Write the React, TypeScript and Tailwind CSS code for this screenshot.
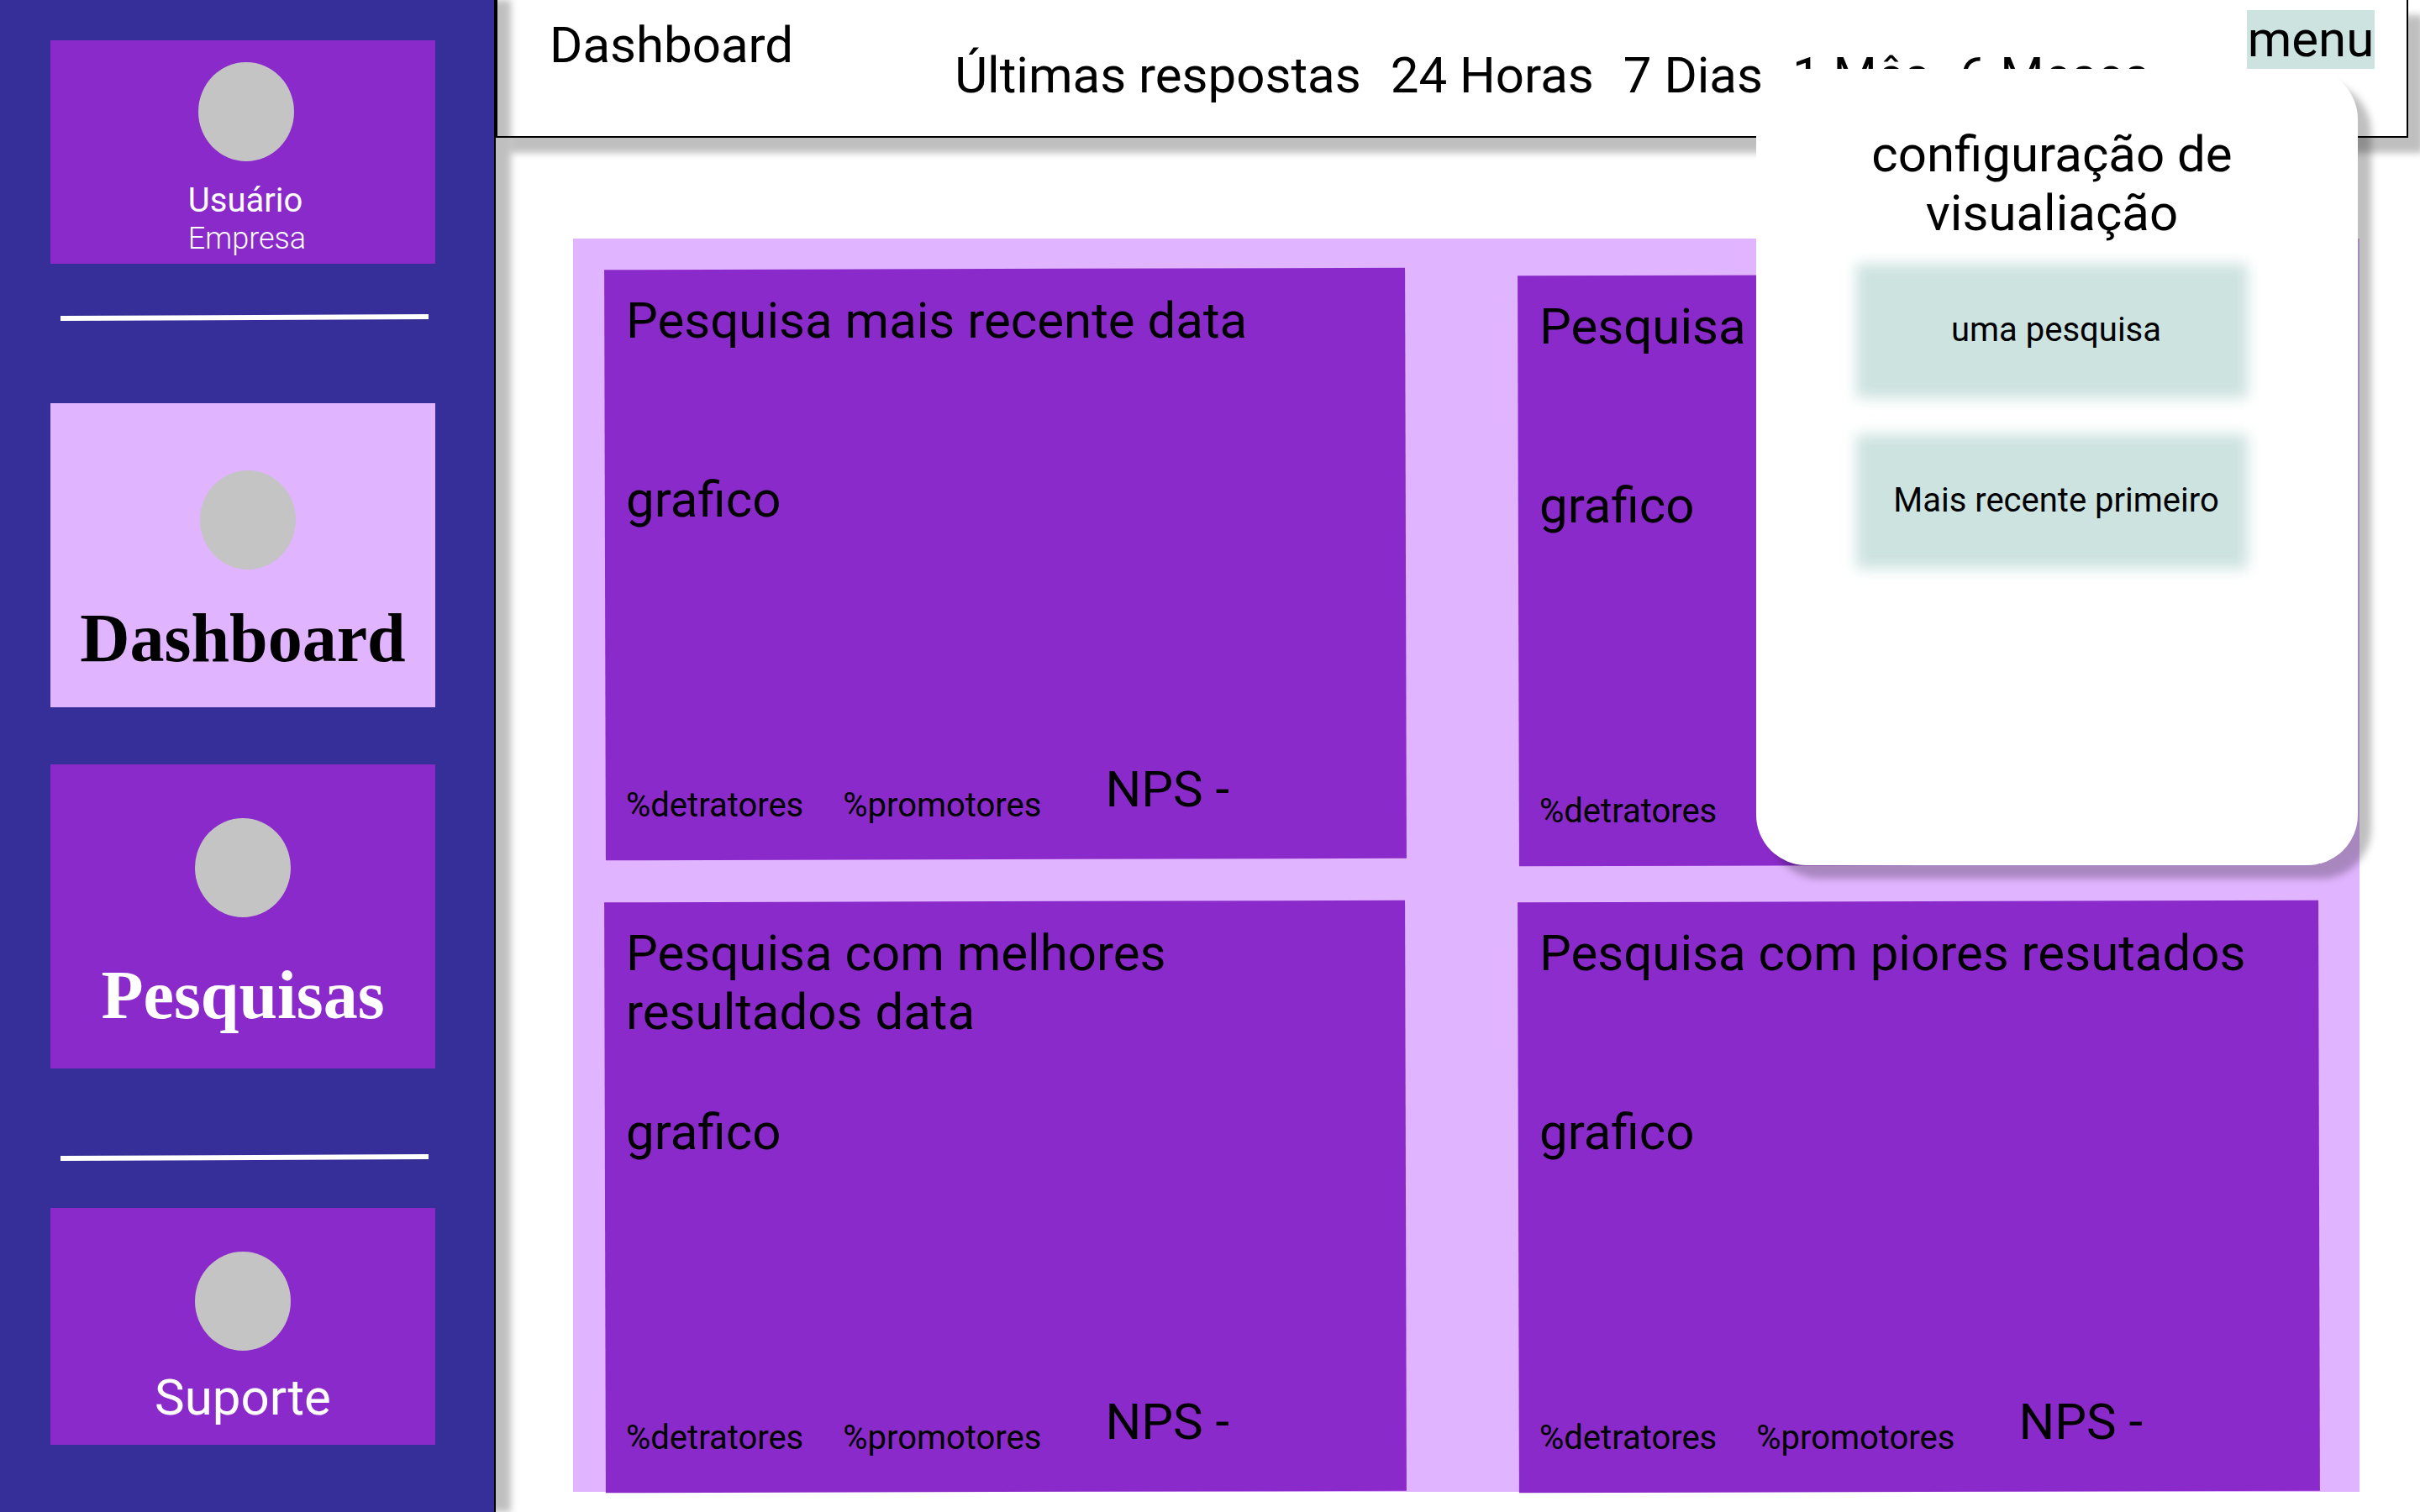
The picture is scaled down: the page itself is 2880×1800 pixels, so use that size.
import type { ReactNode } from "react";

function Avatar() {
  return <span className="block h-[118px] w-[114px] shrink-0 rounded-[50%] bg-[#c4c4c4]" />;
}

function Divider() {
  return <hr className="ml-3 mr-2 h-[6px] -rotate-[0.26deg] border-0 bg-white" />;
}

function NavCard({ className, children }: { className: string; children: ReactNode }) {
  return (
    <a href="#" className={`flex flex-col items-center ${className}`}>
      {children}
    </a>
  );
}

function Sidebar() {
  return (
    <aside className="relative z-10 w-[590px] shrink-0 border-r-2 border-black bg-[#362f99] pl-[60px] pr-[70px] pt-12 shadow-[18px_0_8px_rgba(0,0,0,0.25)]">
      <div className="flex h-[266px] flex-col items-center bg-[#8b2aca] pl-2 pt-[26px] text-white">
        <Avatar />
        <div className="mt-[23px] flex flex-col pl-0.5">
          <span className="text-[40px] leading-[47px]">Usuário</span>
          <span className="text-[36px] font-light leading-[44px]">Empresa</span>
        </div>
      </div>
      <div className="mt-[61px]">
        <Divider />
      </div>
      <nav className="flex flex-col">
        <NavCard className="mt-[99px] h-[362px] bg-[#e1b4ff] pt-20">
          <span className="pl-3">
            <Avatar />
          </span>
          <span className="mt-[35px] font-['Liberation_Serif',serif] text-[82px] font-bold leading-[94px]">Dashboard</span>
        </NavCard>
        <NavCard className="mt-[68px] h-[362px] bg-[#8b2aca] pt-16 text-white">
          <Avatar />
          <span className="mt-[46px] font-['Liberation_Serif',serif] text-[82px] font-bold leading-[94px]">Pesquisas</span>
        </NavCard>
        <div className="mt-[103px]">
          <Divider />
        </div>
        <NavCard className="mt-[57px] h-[282px] bg-[#8b2aca] pt-[52px] text-white">
          <Avatar />
          <span className="mt-[21px] text-[60px] leading-[70px]">Suporte</span>
        </NavCard>
      </nav>
    </aside>
  );
}

const periods = ["24 Horas", "7 Dias", "1 Mês", "6 Meses"];

function SettingsPanel() {
  return (
    <section className="flex h-[948px] w-[716px] flex-col items-center rounded-[60px] bg-white pr-3 pt-[67px] shadow-[16px_16px_8px_rgba(0,0,0,0.25)]">
      <h2 className="w-[480px] text-center">configuração de visualiação</h2>
      <div className="mt-[25px] flex flex-col gap-[43px]">
        {["uma pesquisa", "Mais recente primeiro"].map((label) => (
          <button key={label} className="relative h-[160px] w-[466px] pb-[3px] text-[40px] leading-[47px]">
            <span className="absolute inset-0 bg-[#cde3e0] blur-[8px]" />
            <span className="relative pl-[10px]">{label}</span>
          </button>
        ))}
      </div>
    </section>
  );
}

function Header() {
  return (
    <header className="relative z-[5] mr-[14px] flex h-[164px] items-start border-2 border-t-0 border-black bg-white pl-[62px] pr-[38px] shadow-[18px_18px_8px_rgba(0,0,0,0.25)]">
      <h1 className="mt-[19px]">Dashboard</h1>
      <div className="ml-[192px] mt-[55px] flex gap-[35px] whitespace-nowrap">
        <span>Últimas respostas</span>
        {periods.map((p) => (
          <button key={p}>{p}</button>
        ))}
      </div>
      <button className="ml-auto mt-3 h-[70px] w-[152px] bg-[#cde3e0] text-center">menu</button>
    </header>
  );
}

function SurveyCard({ title, lowered = false }: { title: string; lowered?: boolean }) {
  return (
    <article className={`relative flex h-[703px] flex-col pl-[25px] pt-[27px] ${lowered ? "top-[7px]" : ""}`}>
      <span className="absolute inset-0 -rotate-[0.15deg] bg-[#8b2aca]" />
      <h2 className="relative h-[140px] w-[860px]">{title}</h2>
      <p className="relative mt-[73px]">grafico</p>
      <div className="relative mt-auto flex items-start pb-[41px] text-[40px] leading-[47px]">
        <span className="mt-[30px]">%detratores</span>
        <span className="ml-[47px] mt-[30px]">%promotores</span>
        <span className="ml-[76px] text-[60px] leading-[70px]">NPS -</span>
      </div>
    </article>
  );
}

export default function App() {
  return (
    <div className="relative flex min-h-screen overflow-hidden bg-white font-[Roboto,sans-serif] text-[60px] leading-[70px] text-black">
      <Sidebar />
      <div className="min-w-0 flex-1">
        <Header />
        <main className="ml-[92px] mr-[72px] mt-[120px] grid grid-cols-2 gap-x-[134px] gap-y-[50px] bg-[#e1b4ff] pl-[38px] pr-12 pt-9">
          <SurveyCard title="Pesquisa mais recente data" />
          <SurveyCard title="Pesquisa" lowered />
          <SurveyCard title="Pesquisa com melhores resultados data" />
          <SurveyCard title="Pesquisa com piores resutados" />
        </main>
      </div>
      <div className="absolute right-[74px] top-[82px] z-20">
        <SettingsPanel />
      </div>
    </div>
  );
}
